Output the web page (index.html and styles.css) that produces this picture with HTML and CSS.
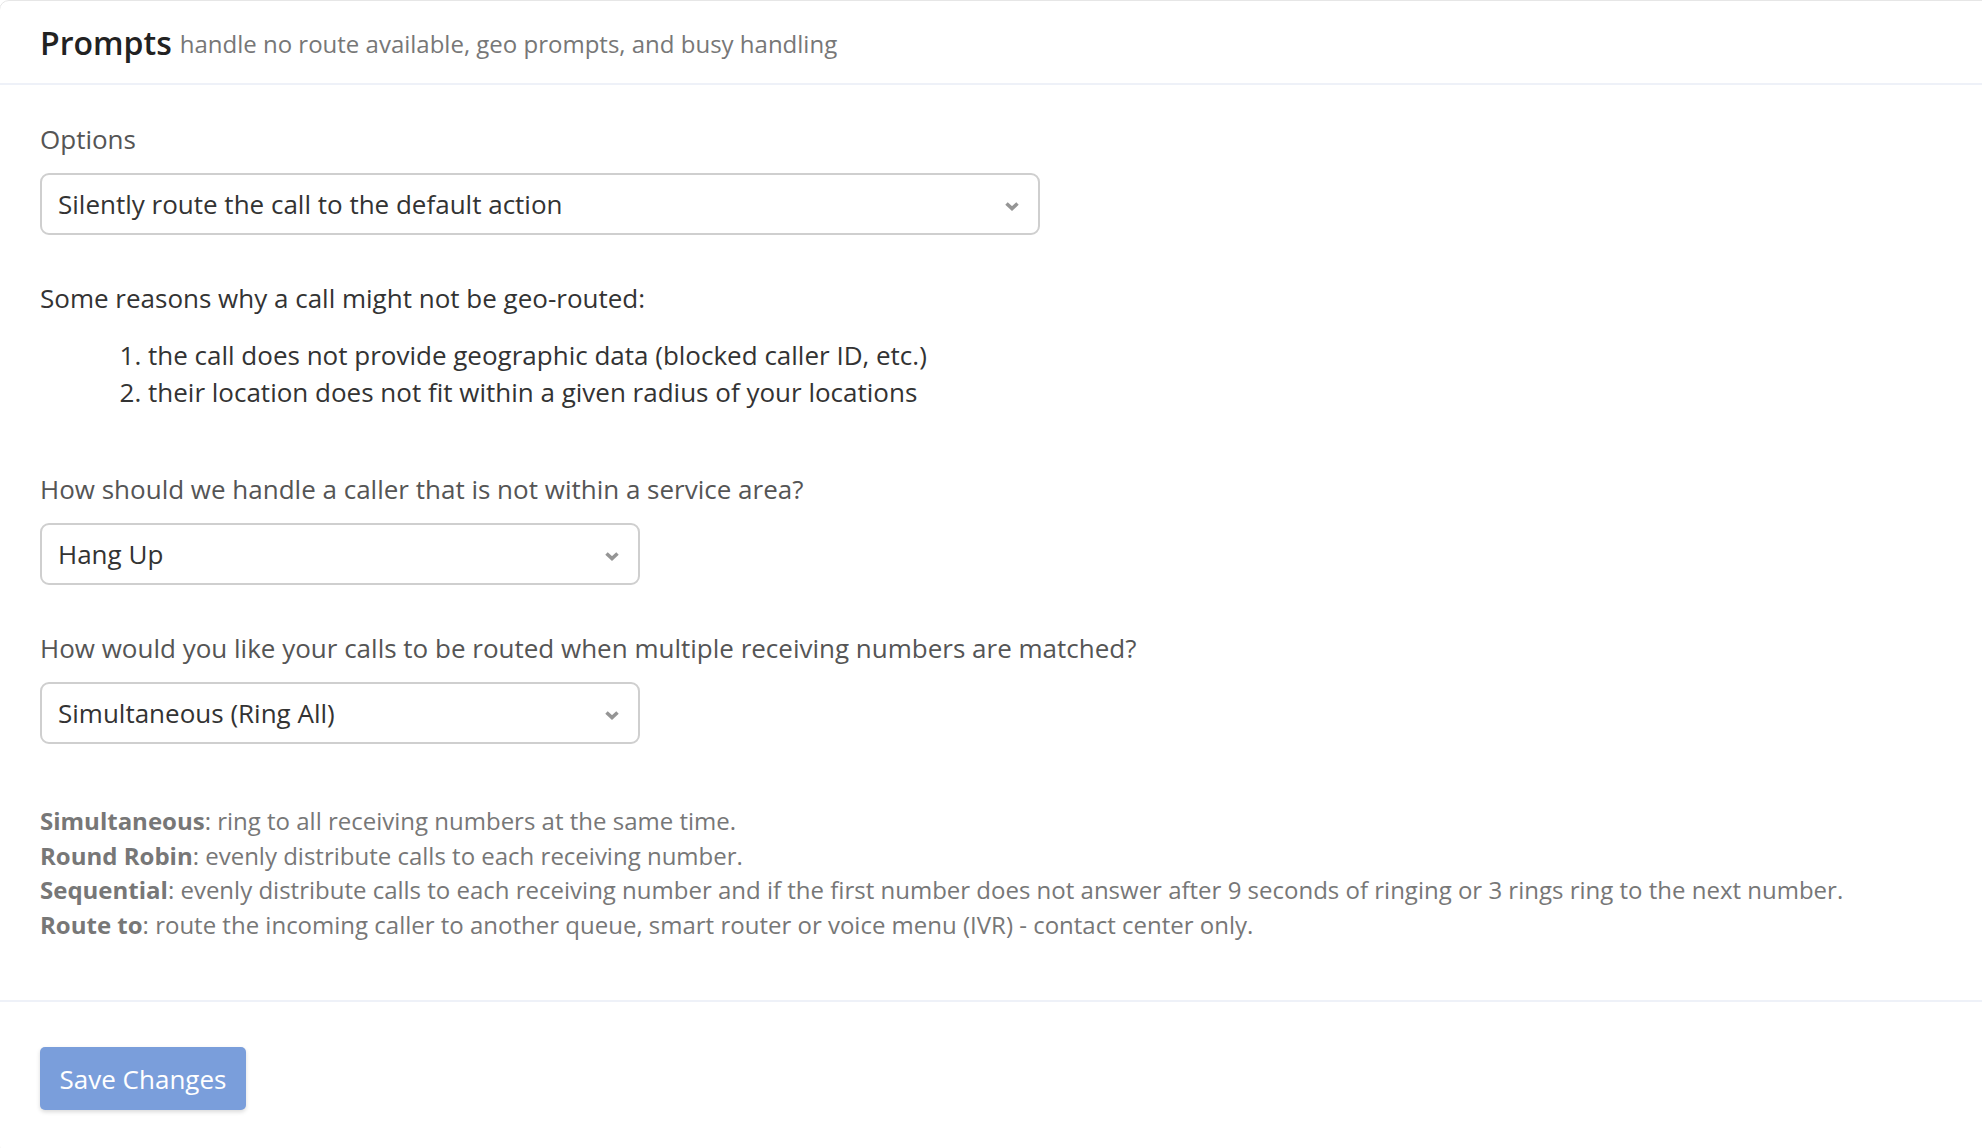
FILE: index.html
```html
<!DOCTYPE html>
<html>
<head lang="en">
    <meta charset="UTF-8">
    <title>Prompts</title>
    <link rel="stylesheet" href="styles.css">
</head>
<body>
<div class="card">
    <div class="card-header">
        <span class="title">Prompts</span>
        <span class="subtitle">handle no route available, geo prompts, and busy handling</span>
    </div>
    <div class="card-body">
        <label class="label">Options</label>
        <div class="select-wrap wide">
            <select class="select">
                <option>Silently route the call to the default action</option>
            </select>
            <svg class="chevron" width="16" height="10" viewBox="0 0 16 10"><path d="M2.5 2.5l5.5 5 5.5-5" fill="none" stroke="#959595" stroke-width="3.6"/></svg>
        </div>

        <p class="reasons">Some reasons why a call might not be geo-routed:</p>
        <ol class="reason-list">
            <li>the call does not provide geographic data (blocked caller ID, etc.)</li>
            <li>their location does not fit within a given radius of your locations</li>
        </ol>

        <label class="label spaced">How should we handle a caller that is not within a service area?</label>
        <div class="select-wrap narrow">
            <select class="select">
                <option>Hang Up</option>
            </select>
            <svg class="chevron" width="16" height="10" viewBox="0 0 16 10"><path d="M2.5 2.5l5.5 5 5.5-5" fill="none" stroke="#959595" stroke-width="3.6"/></svg>
        </div>

        <label class="label">How would you like your calls to be routed when multiple receiving numbers are matched?</label>
        <div class="select-wrap narrow">
            <select class="select">
                <option>Simultaneous (Ring All)</option>
            </select>
            <svg class="chevron" width="16" height="10" viewBox="0 0 16 10"><path d="M2.5 2.5l5.5 5 5.5-5" fill="none" stroke="#959595" stroke-width="3.6"/></svg>
        </div>

        <div class="notes">
            <div><b>Simultaneous</b>: ring to all receiving numbers at the same time.</div>
            <div><b>Round Robin</b>: evenly distribute calls to each receiving number.</div>
            <div><b>Sequential</b>: evenly distribute calls to each receiving number and if the first number does not answer after 9 seconds of ringing or 3 rings ring to the next number.</div>
            <div><b>Route to</b>: route the incoming caller to another queue, smart router or voice menu (IVR) - contact center only.</div>
        </div>
    </div>
    <div class="card-footer">
        <button class="btn">Save Changes</button>
    </div>
</div>
</body>
</html>
```

FILE: styles.css
```css
*{
    margin: 0;
    padding: 0;
    box-sizing: border-box;
}
body{
    font-family: "Open Sans", "Liberation Sans", sans-serif;
    background: #fff;
    color: #333;
}
.card{
    min-height: 1148px;
    border: 1px solid #e6e6e6;
    border-radius: 10px;
    margin: 0 -20px 0 -1px;
}
.card-header{
    height: 84px;
    padding: 0 40px;
    display: flex;
    align-items: center;
    gap: 8px;
    border-bottom: 2px solid #eef1f8;
}
.title{
    font-size: 32px;
    font-weight: 600;
    color: #222;
}
.subtitle{
    font-size: 24px;
    color: #777;
    padding-top: 2px;
}
.card-body{
    padding: 37px 40px 58px;
}
.label{
    display: block;
    font-size: 26px;
    line-height: 34px;
    color: #555;
    margin-bottom: 17px;
}
.label.spaced{
    margin-top: 61px;
}
.select-wrap{
    position: relative;
    margin-bottom: 46px;
}
.select-wrap.wide{
    width: 1000px;
}
.select-wrap.narrow{
    width: 600px;
}
.select{
    appearance: none;
    -webkit-appearance: none;
    width: 100%;
    height: 62px;
    border: 2px solid #cfcfcf;
    border-radius: 9px;
    background: #fff;
    font-family: inherit;
    font-size: 26px;
    color: #333;
    padding: 0 50px 0 16px;
}
.chevron{
    position: absolute;
    right: 20px;
    top: 28px;
}
.reasons{
    font-size: 26px;
    line-height: 34px;
    color: #333;
}
.reason-list{
    margin-top: 22px;
    padding-left: 108px;
    font-size: 26px;
    line-height: 37px;
    color: #333;
}
.notes{
    margin-top: 60px;
    font-size: 24px;
    line-height: 34.6px;
    color: #777;
}
.notes b{
    font-weight: 700;
    color: #777;
}
.card-footer{
    border-top: 2px solid #eef1f8;
    padding: 45px 40px;
}
.btn{
    font-family: inherit;
    font-size: 26px;
    color: #fff;
    background: #7a9edb;
    border: none;
    border-radius: 5px;
    width: 206px;
    height: 63px;
    box-shadow: 0 2px 4px rgba(0,0,0,0.15);
}
```
